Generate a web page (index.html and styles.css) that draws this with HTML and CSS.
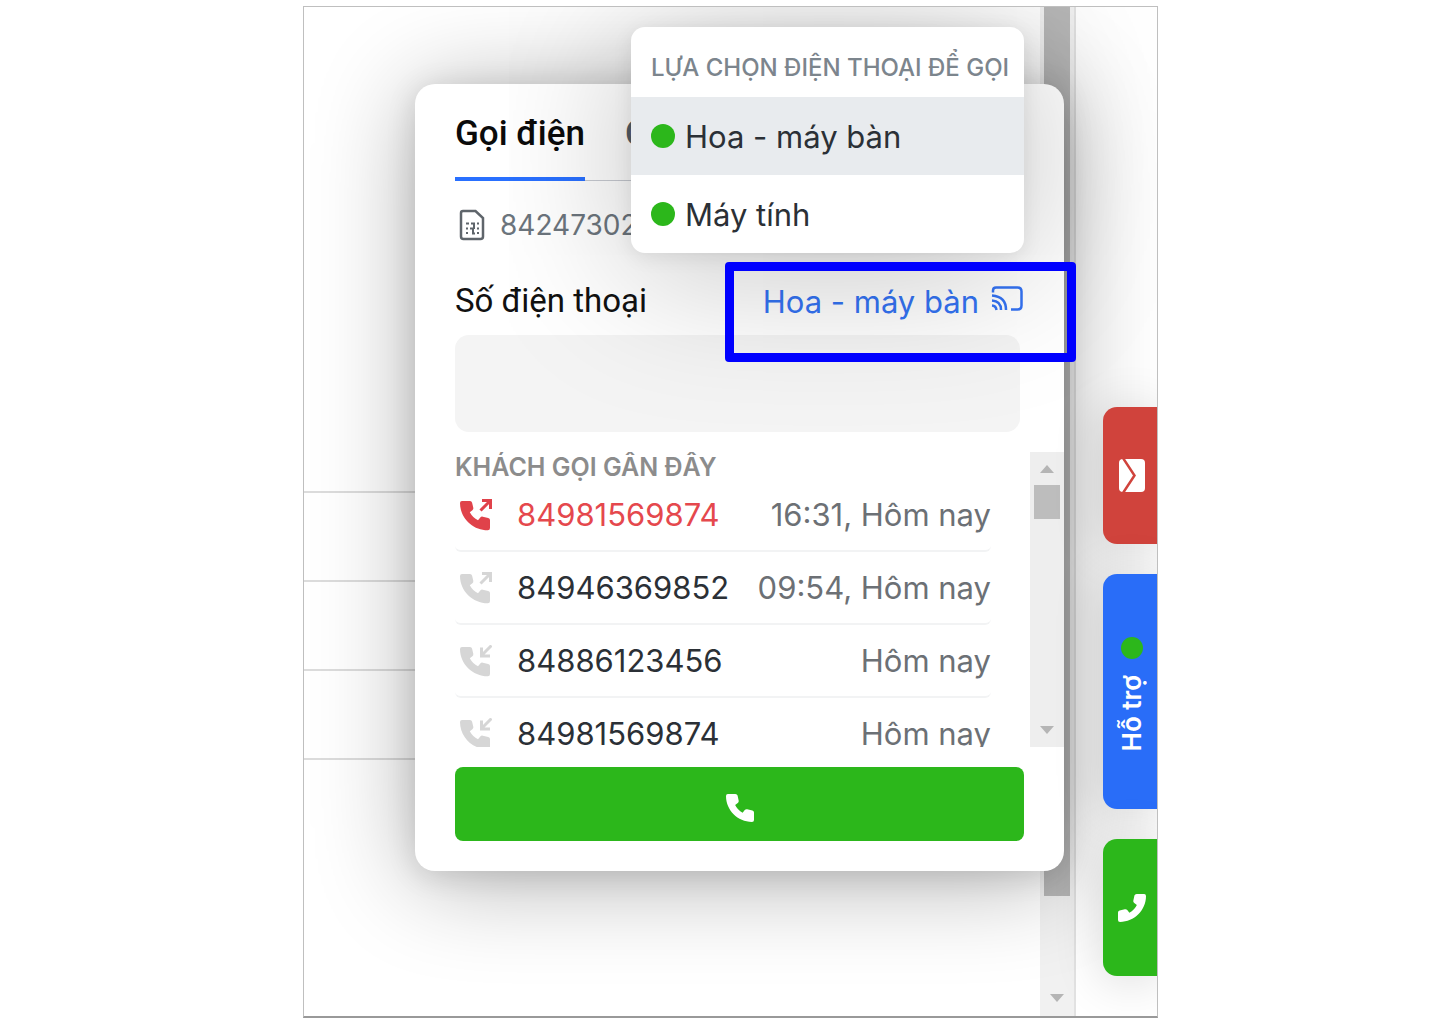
FILE: index.html
```html
<!DOCTYPE html>
<html lang="vi">
<head>
<meta charset="utf-8">
<meta name="viewport" content="width=device-width, initial-scale=1">
<title>Gọi điện</title>
<link rel="stylesheet" href="styles.css">
</head>
<body>
<svg class="defs" aria-hidden="true">
  <symbol id="phone" viewBox="0 0 30 30"><path d="M2 0h8q2 0 2.400 1.700l1.200 5.500q.3 1.600-1 2.500l-2.800 2.200q2.600 5.500 8 8.200l2.300-2.900q1-1.200 2.600-.8l5.600 1.300q1.700.5 1.700 2.100v8q0 2.200-2.200 2.200C12.500 29.800 0 17.500 0 2.200Q0 0 2 0z"/></symbol>
  <symbol id="call-out" viewBox="0 0 32 32"><path d="M2 2h8q1.700 0 2.100 1.700l1.200 5q.3 1.500-.9 2.500l-2.600 2q3 5.500 8.200 8l2.300-2.700q1-1.200 2.500-.8l5.400 1.300q1.800.5 1.800 2.100v8q0 2.200-2.200 2.200C12.500 31.200 0 19 0 4q0-2 2-2z"/><path class="arrow" d="M20.500 11.500l10-10M22 1.500h8.500v8.500"/></symbol>
  <symbol id="call-in" viewBox="0 0 32 32"><path d="M2 2h8q1.700 0 2.100 1.700l1.200 5q.3 1.500-.9 2.500l-2.600 2q3 5.500 8.200 8l2.300-2.700q1-1.200 2.500-.8l5.400 1.300q1.800.5 1.800 2.100v8q0 2.200-2.200 2.200C12.500 31.200 0 19 0 4q0-2 2-2z"/><path class="arrow" d="M31.500 .5l-10 10M21.500 2.500v8.500H30"/></symbol>
</svg>

<main class="frame">
  <div class="page">
    <div class="row-line"></div><div class="row-line"></div><div class="row-line"></div><div class="row-line"></div>
  </div>
  <div class="page-scroll"><div class="page-thumb"></div><i class="down"></i></div>
  <aside class="rail">
    <button class="rail-tab mail" aria-label="Email">
      <svg width="28" height="34" viewBox="0 0 28 34"><rect x="1" y="0" width="26" height="33" rx="4" fill="#fff"/><path d="M5 -1L16.500 16.500 5 34" fill="none" stroke="#d0433c" stroke-width="2.500"/></svg>
    </button>
    <button class="rail-tab support"><span class="dot"></span><span class="vertical">Hỗ trợ</span></button>
    <button class="rail-tab call" aria-label="Gọi"><svg class="flip" width="28" height="28"><use href="#phone"/></svg></button>
  </aside>

  <section class="dialer">
    <nav class="tabs">
      <a href="#call" class="tab active">Gọi điện</a>
      <a href="#log" class="tab">C</a>
    </nav>
    <div class="sim">
      <svg width="26" height="32" viewBox="0 0 26 32" fill="none" stroke="#5f656b"><path stroke-width="2.500" d="M4 2h12.500L24 9v18.500q0 2.500-2.500 2.500h-17Q2 30 2 27.500V4q0-2 2-2z"/><path stroke-width="2" d="M7 14.500h3M12 14.500h4M18 14.500h2M7 19.500h2M7 24h2M18 19.500h2M18 24h2M11 19.500h3v5h2M15 14v6"/></svg>
      <span>84247302</span>
    </div>
    <div class="field-head">
      <label for="phone-number">Số điện thoại</label>
      <button class="device">Hoa - máy bàn
        <svg width="32" height="26" viewBox="0 0 32 26" fill="none" stroke="currentColor" stroke-width="2.500"><path d="M2 6.500V4.500Q2 1.500 5 1.500h21.500q4 0 4 4v14q0 4-4 4H20"/><path d="M1 9.500q14 1 14 14.500M1 14.500q9 .5 9 9.500M1 19.500q4 .3 4.500 4.500"/></svg>
      </button>
    </div>
    <input class="number" id="phone-number" type="tel">
    <div class="recent">
      <div class="recent-list">
        <h2>KHÁCH GỌI GÂN ĐÂY</h2>
        <ul>
          <li class="missed"><svg width="32" height="32"><use href="#call-out"/></svg><span>84981569874</span><time>16:31, Hôm nay</time></li>
          <li><svg width="32" height="32"><use href="#call-out"/></svg><span>84946369852</span><time>09:54, Hôm nay</time></li>
          <li><svg width="32" height="32"><use href="#call-in"/></svg><span>84886123456</span><time>Hôm nay</time></li>
          <li><svg width="32" height="32"><use href="#call-in"/></svg><span>84981569874</span><time>Hôm nay</time></li>
        </ul>
      </div>
      <div class="list-scroll"><i class="up"></i><div class="list-thumb"></div><i class="down"></i></div>
    </div>
    <button class="dial" aria-label="Gọi"><svg width="28" height="28"><use href="#phone"/></svg></button>
  </section>

  <div class="menu">
    <h3>LỰA CHỌN ĐIỆN THOẠI ĐỂ GỌI</h3>
    <button class="selected"><span class="dot"></span>Hoa - máy bàn</button>
    <button><span class="dot"></span>Máy tính</button>
  </div>
  <div class="highlight"></div>
</main>
</body>
</html>
```
FILE: styles.css
```css
* { box-sizing: border-box; }
body {
  margin: 0;
  padding: 6px 0 6px 21px;
  background: #fff;
  color: #2b3036;
  font-family: Inter, "Liberation Sans", sans-serif;
  font-size: 31px;
}
button { border: 0; padding: 0; background: none; font: inherit; color: inherit; }
h2, h3, ul { margin: 0; padding: 0; }
.defs { display: none; }

.frame {
  position: relative;
  display: flex;
  max-width: 855px;
  min-height: calc(100vh - 12px);
  margin: 0 auto;
  border: 1px solid #bfbfbf;
  border-bottom: 2px solid #999;
  overflow: hidden;
}
.page { flex: 1; padding-top: 484px; }
.row-line { height: 89px; border-top: 2px solid #dcdcdc; }
.page-scroll {
  display: flex;
  flex-direction: column;
  align-items: center;
  justify-content: space-between;
  width: 34px;
  padding-bottom: 14px;
  background: #f1f1f1;
}
.page-thumb { width: 26px; height: 889px; background: #b8b8b8; }
.up, .down { border: 7px solid transparent; }
.up { border-top: 0; border-bottom: 8px solid #b5b5b5; }
.down { border-bottom: 0; border-top: 8px solid #b5b5b5; }

.rail {
  display: flex;
  flex-direction: column;
  align-items: flex-end;
  gap: 30px;
  width: 83px;
  padding-top: 400px;
  border-left: 2px solid #e2e2e2;
}
.rail-tab {
  display: flex;
  flex-direction: column;
  align-items: center;
  justify-content: center;
  gap: 16px;
  width: 54px;
  height: 137px;
  padding-left: 4px;
  border-radius: 14px 0 0 14px;
  color: #fff;
  box-shadow: 0 4px 50px rgba(0, 0, 0, .16);
}
.rail-tab svg { fill: #fff; }
.mail { background: #d0433c; }
.support { height: 235px; padding-top: 6px; background: #296df8; z-index: 1; }
.call { background: #2cb71b; z-index: 1; }
.mail { z-index: 1; }
.flip { transform: scaleX(-1); }
.vertical { writing-mode: vertical-rl; transform: rotate(180deg); font-size: 26px; font-weight: 600; line-height: 30px; }
.dot { flex: none; width: 24px; height: 24px; border-radius: 50%; background: #2cb71b; }
.support .dot { width: 22px; height: 22px; }

.dialer {
  position: absolute;
  top: 77px;
  right: 93px;
  width: 649px;
  padding: 0 0 30px 40px;
  border-radius: 20px;
  background: #fff;
  box-shadow: 0 4px 30px rgba(0, 0, 0, .12), 0 8px 100px rgba(0, 0, 0, .32);
}
.tabs { display: flex; gap: 40px; height: 97px; margin-right: 40px; border-bottom: 1px solid #c8cbd2; }
.tab {
  height: 97px;
  border-bottom: 4px solid transparent;
  color: #545d66;
  font: 500 35px/99px Roboto, sans-serif;
  text-decoration: none;
}
.active { color: #0b0b0b; border-color: #2970ff; }
.sim { display: flex; align-items: center; gap: 15px; height: 89px; padding: 0 0 2px 4px; color: #6c757d; font-size: 28px; }
.field-head { display: flex; align-items: center; justify-content: space-between; height: 65px; margin-right: 41px; padding-bottom: 3px; }
.field-head label { color: #111; font: 33px/40px Roboto, sans-serif; }
.device { display: flex; align-items: center; gap: 12px; color: #3473f4; }
.device svg { margin-bottom: 4px; }
.number {
  display: block;
  width: calc(100% - 44px);
  height: 97px;
  border: 0;
  border-radius: 14px;
  background: #f4f4f4;
}
.recent { display: flex; gap: 39px; height: 295px; margin: 20px 0; }
.recent-list { flex: 1; overflow: hidden; }
.recent h2 { margin-bottom: -4px; color: #8c8c8c; font-size: 25px; font-weight: 600; line-height: 31px; }
.recent li {
  display: flex;
  align-items: center;
  height: 73px;
  padding-left: 5px;
  border-bottom: 2px solid #f2f3f4;
  border-radius: 6px;
  fill: #d6d6d6;
}
.recent time { margin-left: auto; color: #6c7075; }
.recent li svg { margin-right: 25px; color: #d6d6d6; }
.recent .missed { color: #e5484d; fill: #e0424a; }
.recent .missed svg { color: #e0424a; }
.arrow { fill: none; stroke: currentColor; stroke-width: 3px; }
.list-scroll { display: flex; flex-direction: column; align-items: center; width: 34px; padding: 13px 0; background: #eee; }
.list-thumb { width: 26px; height: 34px; margin: 12px 0 auto; background: #bdbdbd; }
.dial { display: grid; place-items: center; width: calc(100% - 40px); height: 74px; padding-top: 8px; border-radius: 8px; background: #2cb71b; fill: #fff; }

.menu {
  position: absolute;
  top: 20px;
  right: 133px;
  width: 393px;
  border-radius: 14px;
  overflow: hidden;
  background: #fff;
  box-shadow: 0 4px 20px rgba(0, 0, 0, .08), 0 16px 150px rgba(0, 0, 0, .25);
}
.menu h3 { padding: 12px 20px 0; color: #7c858d; font-size: 24px; font-weight: 450; line-height: 58px; white-space: nowrap; }
.menu button { display: flex; align-items: center; gap: 10px; width: 100%; height: 78px; padding: 0 20px; }
.menu .selected { background: #e8ebee; }
.highlight {
  position: absolute;
  top: 255px;
  right: 81px;
  width: 351px;
  height: 100px;
  border: 9px solid #00f;
  border-radius: 4px;
}
```
